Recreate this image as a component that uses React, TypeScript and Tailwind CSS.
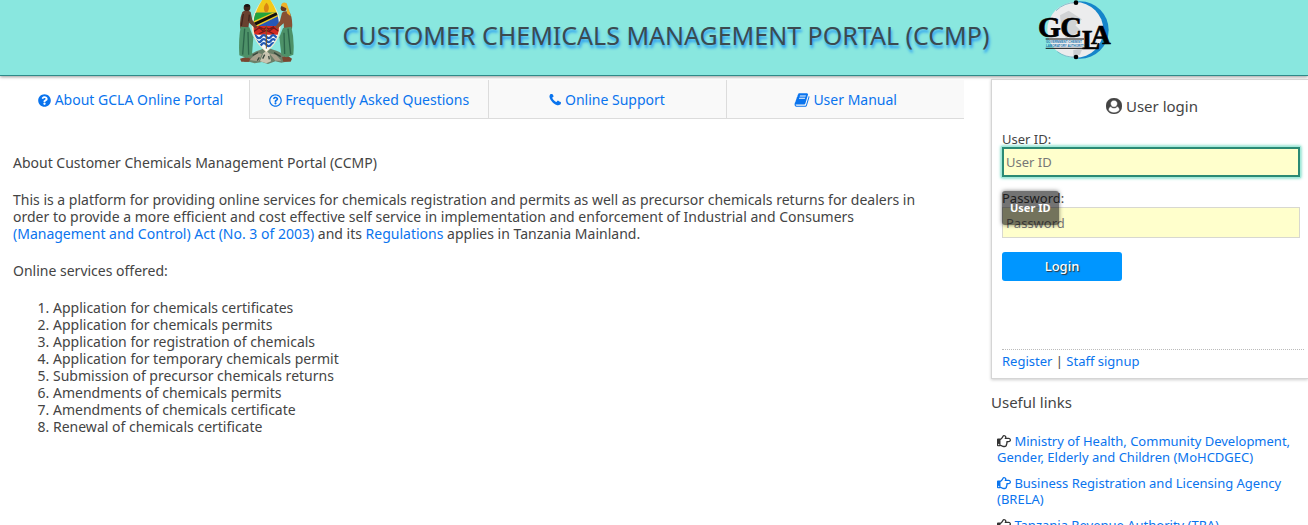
import type { ReactNode } from "react";
import { FaQuestionCircle, FaRegHandPointRight, FaRegQuestionCircle } from "react-icons/fa";

const services = [
  "Application for chemicals certificates",
  "Application for chemicals permits",
  "Application for registration of chemicals",
  "Application for temporary chemicals permit",
  "Submission of precursor chemicals returns",
  "Amendments of chemicals permits",
  "Amendments of chemicals certificate",
  "Renewal of chemicals certificate",
];

const usefulLinks = [
  { label: "Ministry of Health, Community Development, Gender, Elderly and Children (MoHCDGEC)", iconClass: "inline size-[14px] align-[-2px] text-[#333]" },
  { label: "Business Registration and Licensing Agency (BRELA)", iconClass: "inline size-[14px] align-[-2px] text-[#0a74ee]" },
  { label: "Tanzania Revenue Authority (TRA)", iconClass: "inline size-[14px] align-[-2px] text-[#333]" },
];

function PhoneIcon() {
  return (
    <svg viewBox="0 0 512 512" className="inline size-3 align-[-1px]" fill="currentColor" aria-hidden="true">
      <path d="M512 372c0 12-7 40-12 51-7 17-26 29-42 37-20 11-42 18-65 18-33 0-62-13-91-24-22-8-42-18-61-30-60-37-131-108-168-168-12-19-22-39-30-61C32 166 19 137 19 104c0-23 7-45 18-65C45 23 57 4 74-3c11-5 39-12 51-12 2 0 5 0 7 1 7 2 15 18 18 24 11 19 21 39 32 58 5 9 15 20 15 30 0 20-59 49-59 66 0 9 8 20 13 28 33 60 75 102 135 135 8 4 19 13 28 13 17 0 47-61 67-61 10 0 21 10 30 15 19 11 39 21 58 32 7 4 37 17 41 26 2 5 2 13 2 20z" />
    </svg>
  );
}

function BookIcon() {
  return (
    <svg viewBox="0 0 1792 1792" className="inline size-4 align-[-3px]" fill="currentColor" aria-hidden="true">
      <path d="M1703 478q40 57 18 129l-275 906q-19 64-76.500 107.500t-122.500 43.500h-923q-77 0-148.500-53.500t-99.500-131.500q-24-67-2-127 0-4 3-27t4-37q1-8-3-21.500t-3-19.500q2-11 8-21t16.500-23.500 16.500-23.500q23-38 45-91.500t30-91.500q3-10 .5-30t-.5-28q3-11 17-28t17-23q21-36 42-92t25-90q1-9-2.500-32t.5-28q4-13 22-30.500t22-22.500q19-26 42.500-84.500t27.500-96.500q1-8-3-25.500t-2-26.500q2-8 9-18t18-23 17-21q8-12 16.500-30.500t15-35 16-36 19.500-32 26.500-23.500 36-11.500 47.500 5.500l-1 3q38-9 51-9h761q74 0 114 56t18 130l-274 906q-36 119-71.500 153.500t-128.500 34.500h-869q-27 0-38 15-11 16-1 43 24 70 144 70h923q29 0 56-15.500t35-41.500l300-987q7-22 5-57 38 15 59 43zm-1064 2q-4 13 2 22.500t20 9.500h608q13 0 25.500-9.500t16.500-22.500l21-64q4-13-2-22.500t-20-9.500h-608q-13 0-25.500 9.500t-16.500 22.500zm-83 256q-4 13 2 22.500t20 9.500h608q13 0 25.500-9.500t16.500-22.500l21-64q4-13-2-22.500t-20-9.500h-608q-13 0-25.500 9.500t-16.500 22.500z" />
    </svg>
  );
}

function UserCircleIcon() {
  return (
    <svg viewBox="0 0 1792 1792" className="inline size-4 align-[-2px]" fill="currentColor" stroke="currentColor" strokeWidth="50" aria-hidden="true">
      <path d="M1523 1339q-22-155-87.500-257.500t-184.500-118.500q-67 74-159.500 115.500t-195.500 41.500-195.500-41.500-159.500-115.500q-119 16-184.500 118.500t-87.500 257.500q106 150 271 237.500t356 87.500 356-87.500 271-237.500zm-243-699q0-159-112.500-271.500t-271.500-112.500-271.500 112.500-112.500 271.500 112.500 271.500 271.500 112.500 271.500-112.500 112.500-271.500zm512 256q0 182-71 347.500t-190.500 286-285.500 191.500-349 71q-182 0-348-71t-286-191-191-286-71-348 71-348 191-286 286-191 348-71 348 71 286 191 191 286 71 348z" />
    </svg>
  );
}

function CoatOfArms() {
  return (
    <svg viewBox="18 0 168 192" className="h-16 w-14 shrink-0" role="img" aria-label="Coat of arms of Tanzania">
      <defs>
        <clipPath id="shield">
          <path d="M103-16C124 8 141 44 141 78c0 33-17 58-38 75-21-17-39-42-39-75 0-34 18-70 39-94z" />
        </clipPath>
      </defs>
      <path d="M36 186c6-16 26-30 48-36l20-8 22 8c20 6 38 18 44 34l-22 4-18-4-22 8-18-6-22 4-14-4z" fill="#6b7f68" />
      <path d="M52 180l24-22 14 4-10 22zM112 160l20 4 16 18-18 0z" fill="#a7a08c" />
      <path d="M84 184l10-24 9-8 10 10 4 22-14 6z" fill="#c9c4b0" />
      <path d="M62 166l16-8M126 158l20 12M92 176l6-12M112 178l-2-10M76 182l6-10" stroke="#37463b" strokeWidth="4" />
      <path d="M24 176l18-5 14 5-6 9H28zM150 172l18-4 12 8-4 9h-22z" fill="#7b4630" />
      <path d="M103-14C126 10 146 45 146 78c0 34-20 60-43 79-23-19-44-45-44-79 0-33 21-68 44-92z" fill="#f3eccb" />
      <g clipPath="url(#shield)">
        <path d="M60-10h84v54H60z" fill="#f1c91a" />
        <path d="M103 8c10 8 9 20 3 28h-7c-6-10-4-18 4-28z" fill="#d98512" />
        <path d="M60 38h84v40H60z" fill="#2658b8" />
        <path d="M60 38h84L60 74z" fill="#23a43b" />
        <path d="M60 66l62-28h22v8L78 78H60z" fill="#f0cc22" />
        <path d="M60 71l70-33h14v3L68 78h-8z" fill="#111" />
        <path d="M60 78h84v27H60z" fill="#d32b22" />
        <path d="M66 94l16-11 10 9 11-10 11 10 11-9 15 11M80 102l46-22M126 102L80 80" stroke="#741a18" strokeWidth="4" fill="none" />
        <path d="M60 104h84v50H60z" fill="#f7fafc" />
        <path d="M60 110q7-9 14 0t14 0 15 0 14 0 14 0 14 0M60 122q7-9 14 0t14 0 15 0 14 0 14 0 14 0M60 134q7-9 14 0t14 0 15 0 14 0 14 0" stroke="#225ab4" strokeWidth="7" fill="none" />
      </g>
      <path d="M103 76v70" stroke="#7d5520" strokeWidth="3" />
      <path d="M31 36q12-10 25 0l5 24 15 20-5 6-20-18-2 20-24-2q-4-28 6-50z" fill="#69402f" />
      <circle cx="45" cy="23" r="10" fill="#3c241c" />
      <path d="M36 19q5-10 16-5l3 5-10 2z" fill="#171313" />
      <path d="M26 80l26 2 12 30-4 52-16 10-22-8q-3-48 4-86z" fill="#4d9168" />
      <path d="M38 86l-6 78M48 96l2 68" stroke="#2c654a" strokeWidth="4" />
      <path d="M34 42l-6 36M52 44l-2 20" stroke="#3f241c" strokeWidth="4" />
      <path d="M174 38q-12-8-24 0l-6 24-14 18 5 7 20-17 1 18 24-2q3-26-6-48z" fill="#875033" />
      <circle cx="155" cy="25" r="9" fill="#633620" />
      <path d="M147 17q4-14 17-7l8 22 4 17-11-9-2-15z" fill="#efb128" />
      <path d="M178 80l-25 4-11 28 6 52 16 8 20-8q4-46-6-84z" fill="#4d9168" />
      <path d="M168 86l8 76M156 98l2 64" stroke="#2c654a" strokeWidth="4" />
    </svg>
  );
}

function GclaLogo() {
  return (
    <svg viewBox="54 0 222 180" className="h-[60px] w-[74px] shrink-0" role="img" aria-label="GCLA">
      <circle cx="180" cy="90" r="86" fill="#1585ca" />
      <circle cx="166" cy="90" r="84" fill="#ececed" />
      <path d="M120 46l26-14 40 26-20 18 18 18-46 20-14-28z" fill="#d1d3d5" />
      <path d="M160 150l28-6-8 20-20 4z" fill="#cdd0d3" />
      <path d="M168 8a84 84 0 0 0-60 24M168 171a84 84 0 0 1-56-16" fill="none" stroke="#56a6bb" strokeWidth="2" />
      <circle cx="168" cy="8" r="7" fill="#000" />
      <circle cx="168" cy="171" r="7" fill="#000" />
      <g fill="#000" stroke="#000" strokeWidth="2" fontFamily="'Liberation Serif', serif" fontWeight="700">
        <text x="54" y="110" fontSize="88">G</text>
        <text x="121" y="110" fontSize="90">C</text>
        <text x="186" y="147" fontSize="82">L</text>
        <text x="213" y="132" fontSize="82">A</text>
      </g>
      <path d="M77 117h115M77 145h115" stroke="#111" strokeWidth="3" />
      <g fill="#2374ad" fontFamily="'Liberation Sans', sans-serif" fontWeight="700" fontSize="9">
        <text x="78" y="129">GOVERNMENT CHEMIST</text>
        <text x="78" y="140">LABORATORY AUTHORITY</text>
      </g>
    </svg>
  );
}

function Tab({ icon, label, active = false }: { icon: ReactNode; label: string; active?: boolean }) {
  return (
    <a
      href="#"
      className={
        active
          ? "flex-1 border-b border-transparent pt-0.5 text-center leading-9"
          : "flex-1 border-b border-l border-[#dcdcdc] bg-[#f9f9f9] pt-0.5 text-center leading-9"
      }
    >
      {icon} {label}
    </a>
  );
}

export default function App() {
  return (
    <div className="overflow-x-hidden bg-white font-['Noto_Sans',sans-serif] text-sm text-[#444]">
      <header className="flex h-[76px] items-start justify-center gap-[49px] border-b border-[#2e8a89] bg-[#89e7df] pl-[42px] shadow-[0_1px_3px_rgba(0,0,0,0.4)]">
        <CoatOfArms />
        <h1 className="whitespace-nowrap pt-3 text-[25px] leading-[46px] text-[#3b4a50] [text-shadow:1px_3px_3px_#2196f3]">
          CUSTOMER CHEMICALS MANAGEMENT PORTAL (CCMP)
        </h1>
        <GclaLogo />
      </header>

      <div className="grid grid-cols-[minmax(0,1fr)_317px] gap-[27px]">
        <main className="pt-1">
          <nav className="flex pl-3 text-[#0a74ee]">
            <Tab active icon={<FaQuestionCircle className="inline size-[13px] align-[-2px]" />} label="About GCLA Online Portal" />
            <Tab icon={<FaRegQuestionCircle className="inline size-[13px] align-[-2px]" />} label="Frequently Asked Questions" />
            <Tab icon={<PhoneIcon />} label="Online Support" />
            <Tab icon={<BookIcon />} label="User Manual" />
          </nav>
          <div className="flex flex-col gap-5 pt-[35px] pr-5 pl-[13px] leading-[17px]">
            <p>About Customer Chemicals Management Portal (CCMP)</p>
            <p>
              This is a platform for providing online services for chemicals registration and permits as well as precursor chemicals returns for dealers in
              order to provide a more efficient and cost effective self service in implementation and enforcement of Industrial and Consumers{" "}
              <a href="#" className="text-[#0a74ee]">(Management and Control) Act (No. 3 of 2003)</a> and its{" "}
              <a href="#" className="text-[#0a74ee]">Regulations</a> applies in Tanzania Mainland.
            </p>
            <p>Online services offered:</p>
            <ol className="list-decimal pl-10">
              {services.map((service) => (
                <li key={service}>{service}</li>
              ))}
            </ol>
          </div>
        </main>

        <aside className="pt-[3px] text-[13px]">
          <section className="border-y border-l border-[#d5d5d5] pl-2.5 shadow-[0_1px_3px_rgba(0,0,0,0.2)]">
            <h2 className="pt-3.5 pr-1.5 text-center text-[15px] leading-6">
              <UserCircleIcon /> User login
            </h2>
            <form className="pr-2" onSubmit={(event) => event.preventDefault()}>
              <label htmlFor="user-id" className="block pt-3.5 leading-[15px]">User ID:</label>
              <input
                id="user-id"
                type="text"
                placeholder="User ID"
                className="block h-[30px] w-full border-2 border-[#2b8a74] bg-[#ffffcc] px-0.5 shadow-[0_0_3px_1px_#4fd0b4] outline-1 outline-[#a5eadb] placeholder:text-[#777]"
              />
              <div className="relative pt-3">
                <label htmlFor="password" className="block leading-[18px]">Password:</label>
                <input
                  id="password"
                  type="password"
                  placeholder="Password"
                  className="block h-[31px] w-full border border-[#d8d8d0] bg-[#ffffcc] px-[3px] placeholder:text-[#777]"
                />
                <div role="tooltip" className="absolute top-3.5 left-0 rounded-[3px] bg-black/55 px-2 text-[11px] leading-[34px] font-bold text-white shadow-[0_0_4px_rgba(0,0,0,0.5)]">
                  User ID
                </div>
              </div>
              <button type="submit" className="mt-3.5 block h-[29px] w-[120px] rounded-[3px] bg-[#0096ff] text-[13px] font-medium text-white [text-shadow:1px_1px_1px_#333]">
                Login
              </button>
            </form>
            <div className="mt-[68px] mr-1 border-t border-dotted border-[#bbb] pt-0.5 pb-2 leading-[18px]">
              <a href="#" className="text-[#0a74ee]">Register</a> | <a href="#" className="text-[#0a74ee]">Staff signup</a>
            </div>
          </section>
          <h2 className="pt-3 text-[15px] leading-[22px]">Useful links</h2>
          <ul className="flex flex-col gap-2.5 pt-5 pr-2 pl-1.5 leading-4">
            {usefulLinks.map(({ label, iconClass }) => (
              <li key={label}>
                <a href="#" className="text-[#0a74ee]">
                  <FaRegHandPointRight className={iconClass} /> {label}
                </a>
              </li>
            ))}
          </ul>
        </aside>
      </div>
    </div>
  );
}
